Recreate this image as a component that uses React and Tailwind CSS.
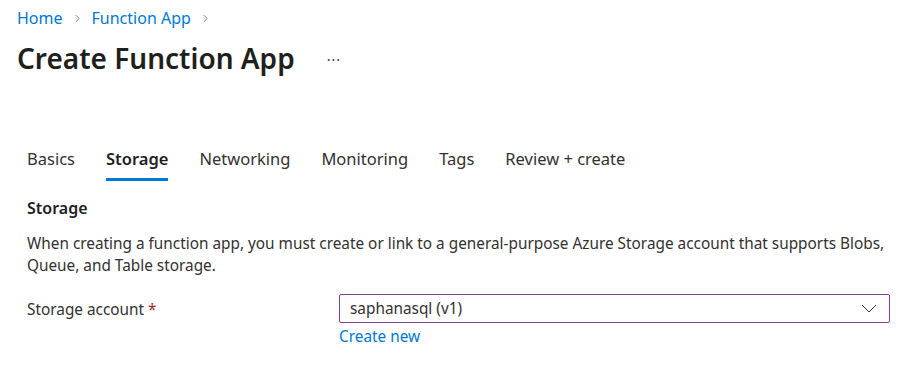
import { ChevronRight } from 'lucide-react';

const tabs = ['Basics', 'Storage', 'Networking', 'Monitoring', 'Tags', 'Review + create'];

export default function App() {
  return (
    <div className="w-[900px] h-[378px] bg-white overflow-hidden text-[#323130] font-['Noto_Sans',sans-serif]">
      {/* Header */}
      <div className="px-[17px] pt-[6px]">
        <nav className="flex items-center gap-[8px] text-[16px] leading-[24px] text-[#0078d4]">
          <span>Home</span>
          <ChevronRight className="w-[13px] h-[13px] text-[#605e5c]" strokeWidth={1.5} />
          <span>Function App</span>
          <ChevronRight className="w-[13px] h-[13px] text-[#605e5c]" strokeWidth={1.5} />
        </nav>
        <div className="flex items-center mt-[10px]">
          <h1 className="text-[28px] leading-[36px] font-semibold text-[#201f1e]">Create Function App</h1>
          <span className="ml-[32px] mt-[2px] text-[14px] tracking-[1px] text-[#323130]">···</span>
        </div>
      </div>

      {/* Tabs */}
      <div className="flex px-[27px] mt-[71px] gap-[31px] text-[16.5px] leading-[24px]">
        {tabs.map((t) => (
          <div key={t} className="flex flex-col">
            <span className={t === 'Storage' ? 'font-semibold text-[#201f1e]' : 'text-[#323130]'}>{t}</span>
            <div className={`h-[3px] mt-[7px] ${t === 'Storage' ? 'bg-[#0078d4]' : 'bg-transparent'}`} />
          </div>
        ))}
      </div>

      {/* Content */}
      <div className="pl-[27px] pr-[10px] mt-[15px]">
        <h2 className="text-[16px] leading-[24px] font-semibold text-[#201f1e]">Storage</h2>
        <p className="mt-[12px] text-[15.35px] leading-[22px]">
          When creating a function app, you must create or link to a general-purpose Azure Storage account that supports Blobs,
          Queue, and Table storage.
        </p>

        <div className="flex mt-[18px]">
          <div className="w-[312px] pt-[4px] text-[15.35px] leading-[22px]">
            Storage account <span className="text-[#a4262c]">*</span>
          </div>
          <div className="flex-1">
            <div className="h-[29px] border border-[#7f3f8f] rounded-[2px] flex items-center justify-between pl-[10px] pr-[12px] text-[15.35px]">
              <span>saphanasql (v1)</span>
              <svg width="16" height="9" viewBox="0 0 16 9" fill="none" className="text-[#323130]">
                <path d="M1 1 L8 8 L15 1" stroke="currentColor" strokeWidth="1" />
              </svg>
            </div>
            <div className="mt-[2px] text-[15.35px] leading-[22px] text-[#0078d4]">Create new</div>
          </div>
        </div>
      </div>
    </div>
  );
}
